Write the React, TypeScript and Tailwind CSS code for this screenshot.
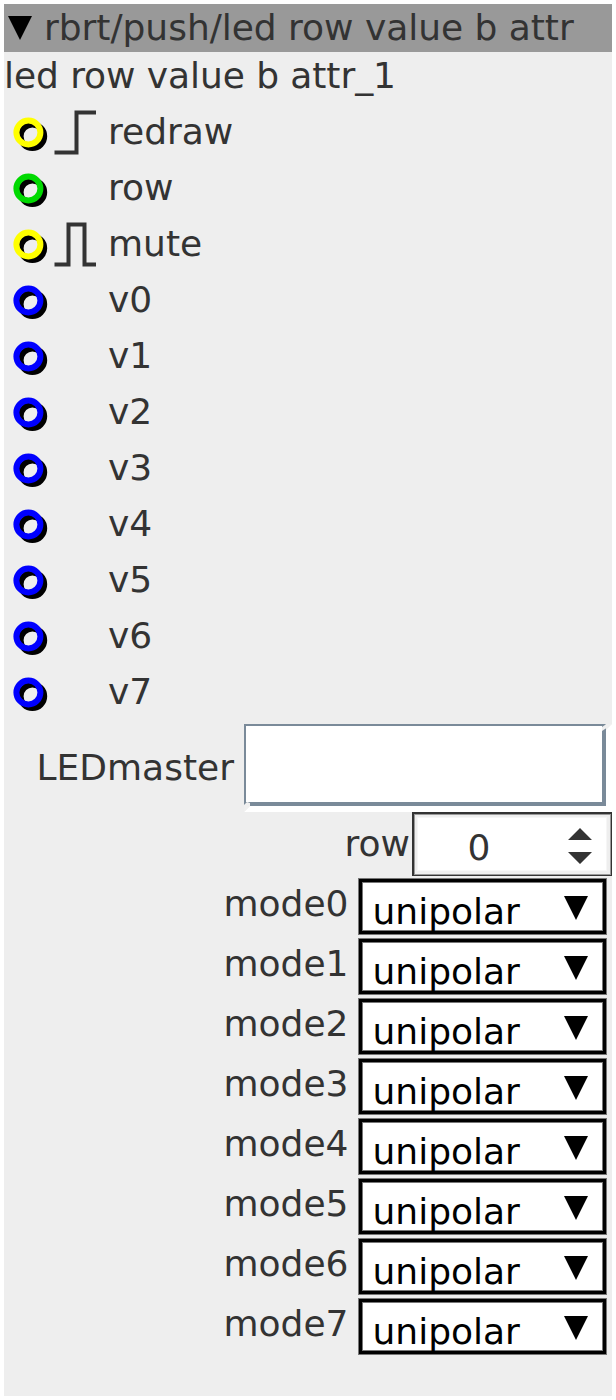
import React from "react";

interface Inlet {
  name: string;
  color: string;
  edge?: "rising" | "pulse";
}

const inlets: Inlet[] = [
  { name: "redraw", color: "#ffff00", edge: "rising" },
  { name: "row", color: "#00d900" },
  { name: "mute", color: "#ffff00", edge: "pulse" },
  ...[0, 1, 2, 3, 4, 5, 6, 7].map((n) => ({ name: `v${n}`, color: "#0000ff" })),
];

const modes = [0, 1, 2, 3, 4, 5, 6, 7];

const InletRow: React.FC<{ inlet: Inlet }> = ({ inlet }) => (
  <div className="flex h-14 items-center">
    <svg className="h-14 w-[104px] shrink-0" viewBox="4 0 104 56" fill="none">
      <circle cx="32.4" cy="32.3" r="11.8" stroke="#000" strokeWidth="6" />
      <circle cx="28.4" cy="28.5" r="12" stroke={inlet.color} strokeWidth="6" />
      {inlet.edge === "rising" && (
        <path d="M54.5 48.5H76.5V8.5H96" stroke="#333" strokeWidth="4" />
      )}
      {inlet.edge === "pulse" && (
        <path d="M54.5 48.5H68.5V8.5H84.5V48.5H96" stroke="#333" strokeWidth="4" />
      )}
    </svg>
    <span className="leading-[56px]">{inlet.name}</span>
  </div>
);

const ModeRow: React.FC<{ index: number }> = ({ index }) => (
  <div className="flex h-[60px] justify-end pr-[5px]">
    <span className="mr-[9.5px] leading-[56px]">mode{index}</span>
    <button className="mt-[2px] flex h-[57px] w-[249px] items-start border border-[#777] bg-white pl-[13.5px] text-black shadow-[inset_0_0_0_3px_#000,inset_0_0_0_4px_#777]">
      <span className="flex-1 text-left leading-[66px]">unipolar</span>
      <svg className="mt-[17px] mr-[18px] h-6 w-6" viewBox="0 0 24 24">
        <path d="M0 0H24L12 24Z" />
      </svg>
    </button>
  </div>
);

const App: React.FC = () => {
  return (
    <div className="h-[1400px] w-[616px] bg-white p-1 font-['DejaVu_Sans',sans-serif] text-[36px] whitespace-pre text-[#333]">
      <div className="h-full bg-[#eee]">
        <div className="flex h-12 items-center bg-[#999]">
          <svg className="ml-1 h-6 w-6" viewBox="0 0 24 24">
            <path d="M0 0H24L12 24Z" fill="#000" />
          </svg>
          <span className="ml-3 leading-[48px] tracking-[-0.03px]">rbrt/push/led row value b attr</span>
        </div>
        <div className="mb-1 h-12 leading-[48px] tracking-[-0.07px]">led row value b attr_1</div>

        {inlets.map((inlet) => (
          <InletRow key={inlet.name} inlet={inlet} />
        ))}

        <div className="flex h-[92px] justify-end">
          <span className="mr-2.5 leading-[96px]">LEDmaster</span>
          {/* bevelled border with notched corners */}
          <svg className="mt-1 h-[88px] w-[368px] overflow-visible" viewBox="0 0 368 88">
            <path d="M0 88L6 82V80H362V6L368 0V88Z" fill="#fff" />
            <path d="M0 0H362V82H6V81H0Z" fill="#7a8a99" />
            <path d="M2 2H358V78H2Z" fill="#fff" />
            <path d="M368 0L361 5L358 7V3L361 1L362 0Z" fill="#f0f0f0" />
            <path d="M0 88L6 82V79L3 78L0 81Z" fill="#f0f0f0" />
          </svg>
        </div>

        <div className="flex h-16 justify-end">
          <span className="mr-[2px] leading-[64px]">row</span>
          <div className="h-16 w-[200px] border-t-2 border-r border-b border-l-2 border-[#333]">
            <div className="h-full border border-[#999] bg-[#eee] pt-[2px] pr-[3px] pb-[3px] pl-[2px]">
              <div className="flex h-full items-start border border-[#f6f6f6] bg-white">
                <span className="w-[150px] pl-[49.5px] leading-[59px]">0</span>
                <svg className="mt-2.5 h-9 w-6" viewBox="0 0 24 36" fill="#333">
                  <path d="M0 12L12 0L24 12ZM0 24H24L12 36Z" />
                </svg>
              </div>
            </div>
          </div>
        </div>

        {modes.map((n) => (
          <ModeRow key={n} index={n} />
        ))}
      </div>
    </div>
  );
};

export default App;
